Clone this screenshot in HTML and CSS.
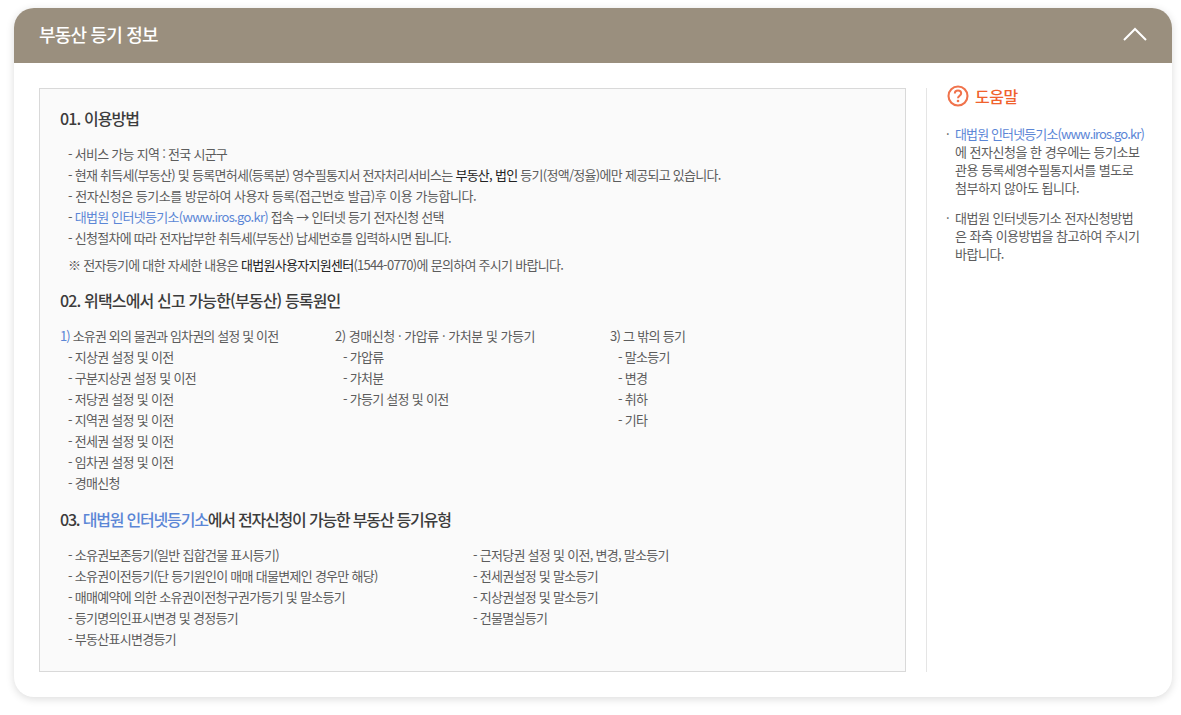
FILE: index.html
```html
<!DOCTYPE html>
<html lang="ko">
<head>
<meta charset="utf-8">
<title>부동산 등기 정보</title>
<link rel="stylesheet" href="styles.css">
</head>
<body>
<section class="card">
  <header class="card-head">
    <h1>부동산 등기 정보</h1>
    <svg class="chevron" width="24" height="14" viewBox="0 0 24 14"><path d="M1 13 12 2l11 11" fill="none" stroke="#fff" stroke-width="2"/></svg>
  </header>
  <div class="card-body">
    <main class="info">
      <h2>01. 이용방법</h2>
      <ul class="lines first">
        <li>- 서비스 가능 지역 : 전국 시군구</li>
        <li>- 현재 취득세(부동산) 및 등록면허세(등록분) 영수필통지서 전자처리서비스는 <b>부동산, 법인</b> 등기(정액/정율)에만 제공되고 있습니다.</li>
        <li class="wide">- 전자신청은 등기소를 방문하여 사용자 등록(접근번호 발급)후 이용 가능합니다.</li>
        <li>- <span class="blue">대법원 인터넷등기소(www.iros.go.kr)</span> 접속 → 인터넷 등기 전자신청 선택</li>
        <li>- 신청절차에 따라 전자납부한 취득세(부동산) 납세번호를 입력하시면 됩니다.</li>
      </ul>
      <p class="note">※ 전자등기에 대한 자세한 내용은 <b>대법원사용자지원센터</b>(1544-0770)에 문의하여 주시기 바랍니다.</p>
      <h2 class="h-02">02. 위택스에서 신고 가능한(부동산) 등록원인</h2>
      <div class="cols">
        <div class="col">
          <p class="col-title narrow"><span class="blue">1)</span> 소유권 외의 물권과 임차권의 설정 및 이전</p>
          <ul class="lines">
            <li>- 지상권 설정 및 이전</li>
            <li>- 구분지상권 설정 및 이전</li>
            <li>- 저당권 설정 및 이전</li>
            <li>- 지역권 설정 및 이전</li>
            <li>- 전세권 설정 및 이전</li>
            <li>- 임차권 설정 및 이전</li>
            <li>- 경매신청</li>
          </ul>
        </div>
        <div class="col">
          <p class="col-title wide">2) 경매신청 · 가압류 · 가처분 및 가등기</p>
          <ul class="lines">
            <li>- 가압류</li>
            <li>- 가처분</li>
            <li>- 가등기 설정 및 이전</li>
          </ul>
        </div>
        <div class="col">
          <p class="col-title">3) 그 밖의 등기</p>
          <ul class="lines">
            <li>- 말소등기</li>
            <li>- 변경</li>
            <li>- 취하</li>
            <li>- 기타</li>
          </ul>
        </div>
      </div>
      <h2 class="h-03">03. <span class="blue">대법원 인터넷등기소</span>에서 전자신청이 가능한 부동산 등기유형</h2>
      <div class="cols two">
        <ul class="lines">
          <li>- 소유권보존등기(일반 집합건물 표시등기)</li>
          <li>- 소유권이전등기(단 등기원인이 매매 대물변제인 경우만 해당)</li>
          <li>- 매매예약에 의한 소유권이전청구권가등기 및 말소등기</li>
          <li>- 등기명의인표시변경 및 경정등기</li>
          <li>- 부동산표시변경등기</li>
        </ul>
        <ul class="lines">
          <li>- 근저당권 설정 및 이전, 변경, 말소등기</li>
          <li>- 전세권설정 및 말소등기</li>
          <li>- 지상권설정 및 말소등기</li>
          <li>- 건물멸실등기</li>
        </ul>
      </div>
    </main>
    <aside class="help">
      <h3>
        <svg width="22" height="22" viewBox="0 0 22 22"><circle cx="11" cy="11" r="9.5" fill="none" stroke="#f0734c" stroke-width="2.1"/><path d="M7.8 8.4c0-1.9 1.4-3 3.2-3s3.2 1.1 3.2 2.8c0 2.5-3.2 2.5-3.2 5" fill="none" stroke="#f0734c" stroke-width="2"/><circle cx="11" cy="16" r="1.3" fill="#f0734c"/></svg>
        도움말
      </h3>
      <ul>
        <li><span class="blue tight">대법원 인터넷등기소(www.iros.go.kr)</span><br>에 전자신청을 한 경우에는 등기소보<br>관용 등록세영수필통지서를 별도로<br>첨부하지 않아도 됩니다.</li>
        <li>대법원 인터넷등기소 전자신청방법<br>은 좌측 이용방법을 참고하여 주시기<br>바랍니다.</li>
      </ul>
    </aside>
  </div>
</section>
</body>
</html>
```
FILE: styles.css
```css
* { box-sizing: border-box; }
html, body { margin: 0; padding: 0; }
body {
  background: #fff;
  font-family: "Noto Sans CJK KR", "Noto Sans", sans-serif;
  color: #5c5c5c;
  padding: 8px 9px 18px 14px;
}
h1, h2, h3, p, ul { margin: 0; padding: 0; }
ul { list-style: none; }
.card {
  width: 1158px;
  height: 689px;
  border-radius: 20px;
  background: #fff;
  box-shadow: 0 2px 8px rgba(0, 0, 0, .14);
  overflow: hidden;
}
.card-head {
  height: 55px;
  background: #9a8f7e;
  display: flex;
  align-items: center;
  justify-content: space-between;
  padding: 0 25px;
}
.card-head h1 {
  font-size: 18px;
  line-height: 24px;
  margin-top: -4px;
  font-weight: 500;
  color: #fff;
  letter-spacing: -.8px;
}
.chevron { margin-top: -3px; }
.card-body {
  display: flex;
  padding: 25px 0 0 25px;
}
.info {
  width: 867px;
  height: 584px;
  border: 1px solid #d9d9d9;
  background: #fafafa;
  padding: 17px 20px 0;
  font-size: 13px;
  letter-spacing: -.72px;
}
.info h2 {
  font-size: 16px;
  line-height: 24px;
  margin-top: 0;
  font-weight: 500;
  color: #3c3c3c;
  letter-spacing: -.9px;
}
.info b { font-weight: 400; color: #222; }
.blue { color: #5b86d6; }
.wide { letter-spacing: -.47px; }
.narrow { letter-spacing: -.85px; }
.lines li { line-height: 21px; height: 21px; white-space: nowrap; }
.lines { padding-left: 8px; }
.lines.first { margin-top: 13px; }
.note { margin: 6px 0 0 8px; line-height: 21px; }
.info .h-02 { margin-top: 13px; letter-spacing: -.85px; }
.cols { display: flex; margin-top: 13px; }
.col { width: 275px; }
.col-title { line-height: 21px; }
.info .h-03 { margin-top: 14px; letter-spacing: -1.2px; }
.cols.two { margin-top: 13px; }
.cols.two .lines { width: 405px; }
.help {
  margin-left: 20px;
  width: 226px;
  height: 584px;
  border-left: 1px solid #e5e5e5;
  padding-left: 20px;
}
.help h3 {
  display: flex;
  align-items: center;
  gap: 6px;
  font-size: 16px;
  line-height: 18px;
  font-weight: 500;
  color: #f0622d;
  letter-spacing: -.5px;
  margin-top: -3px;
}
.help ul { margin-top: 18px; font-size: 13px; line-height: 18px; letter-spacing: -.5px; }
.help .tight { letter-spacing: -.88px; }
.help li { padding-left: 8px; width: 210px; position: relative; margin-bottom: 12px; white-space: nowrap; }
.help li::before { content: "·"; position: absolute; left: -1px; top: 0; }
```
